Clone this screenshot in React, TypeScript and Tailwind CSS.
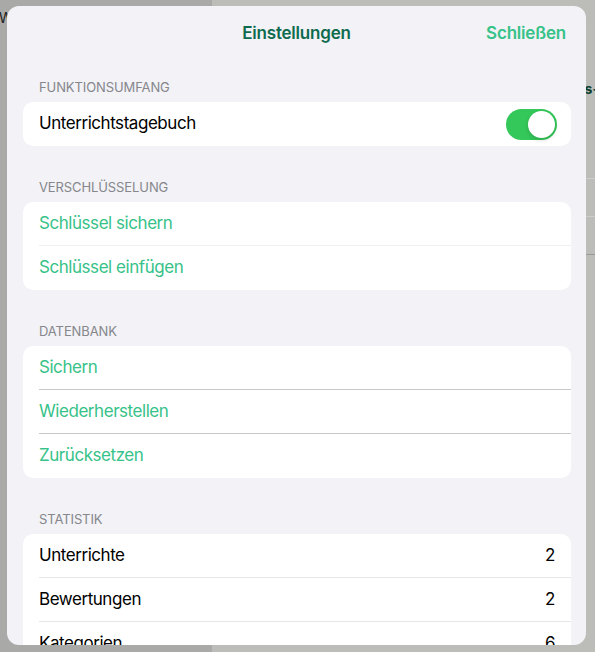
import React from 'react'

const font = { fontFamily: 'Inter, "Noto Sans", "Liberation Sans", sans-serif' }

const SectionHeader = ({ title, first }: { title: string; first?: boolean }) => (
  <div
    className={`${first ? 'pt-[17px]' : 'pt-[33px]'} pb-[7px] pl-[16px] text-[13px] leading-[16px] uppercase text-[#86868b] tracking-[-0.1px]`}
  >
    {title}
  </div>
)

const Toggle = ({ on }: { on: boolean }) => (
  <div
    className={`w-[51px] h-[31px] rounded-full p-[2px] flex ${on ? 'bg-[#34c759] justify-end' : 'bg-[#e9e9ea] justify-start'}`}
  >
    <div className="w-[27px] h-[27px] rounded-full bg-white shadow-[0_2px_4px_rgba(0,0,0,0.15)]" />
  </div>
)

const App = () => {
  const database = ['Sichern', 'Wiederherstellen', 'Zurücksetzen']
  const stats = [
    { label: 'Unterrichte', value: 2 },
    { label: 'Bewertungen', value: 2 },
    { label: 'Kategorien', value: 6 },
  ]

  return (
    <div className="relative w-[595px] h-[652px] overflow-hidden flex" style={font}>
      {/* dimmed split view behind the sheet */}
      <div className="w-[212px] h-full bg-[#a9aaa8] pt-[10px]">
        <div className="text-[14px] leading-[16px] text-[#1c1c1c] -ml-[1px]">Wochen</div>
      </div>
      <div className="flex-1 h-full bg-[#bcbdb9] flex flex-col">
        <div className="h-[80px]" />
        <div className="flex justify-end -mr-[4px]">
          <span className="text-[14px] leading-[18px] font-bold text-[#0d3d2c]">Klassens-</span>
        </div>
        <div className="h-[81px] border-b border-[#cdcecb]" />
        <div className="h-[38px] border-b border-[#cdcecb]" />
        <div className="h-[38px] border-b border-[#9a9b98]" />
      </div>

      {/* settings sheet */}
      <div className="absolute left-[7px] top-[6px] w-[579px] h-[639px] rounded-[12px] bg-[#f2f2f7] overflow-hidden flex flex-col">
        <div className="h-[56px] shrink-0 flex items-center relative">
          <div className="flex-1 text-center text-[17px] font-semibold text-[#0f6b4e] tracking-[-0.2px]">
            Einstellungen
          </div>
          <div className="absolute right-[20px] top-0 h-full flex items-center text-[17px] font-semibold text-[#36c288] tracking-[-0.2px]">
            Schließen
          </div>
        </div>

        <div className="pl-[16px] pr-[15px] text-[17px] tracking-[-0.45px]">
          <SectionHeader title="Funktionsumfang" first />
          <div className="bg-white rounded-[10px]">
            <div className="h-[44px] flex items-center justify-between pl-[16px] pr-[14px] text-black">
              <span>Unterrichtstagebuch</span>
              <Toggle on />
            </div>
          </div>

          <SectionHeader title="Verschlüsselung" />
          <div className="bg-white rounded-[10px] pl-[16px]">
            <div className="h-[44px] flex items-center text-[#36c288] border-b border-[#f0f0f3]">
              Schlüssel sichern
            </div>
            <div className="h-[44px] flex items-center text-[#36c288]">Schlüssel einfügen</div>
          </div>

          <SectionHeader title="Datenbank" />
          <div className="bg-white rounded-[10px] pl-[16px]">
            {database.map((item, i) => (
              <div
                key={item}
                className={`h-[44px] flex items-center text-[#36c288] ${i < database.length - 1 ? 'border-b border-[#c8c8cc]' : ''}`}
              >
                {item}
              </div>
            ))}
          </div>

          <SectionHeader title="Statistik" />
          <div className="bg-white rounded-[10px] pl-[16px]">
            {stats.map((s, i) => (
              <div
                key={s.label}
                className={`h-[44px] flex items-center justify-between pr-[16px] text-black ${i < stats.length - 1 ? 'border-b border-[#e5e5ea]' : ''}`}
              >
                <span>{s.label}</span>
                <span>{s.value}</span>
              </div>
            ))}
          </div>
        </div>
      </div>
    </div>
  )
}

export default App
